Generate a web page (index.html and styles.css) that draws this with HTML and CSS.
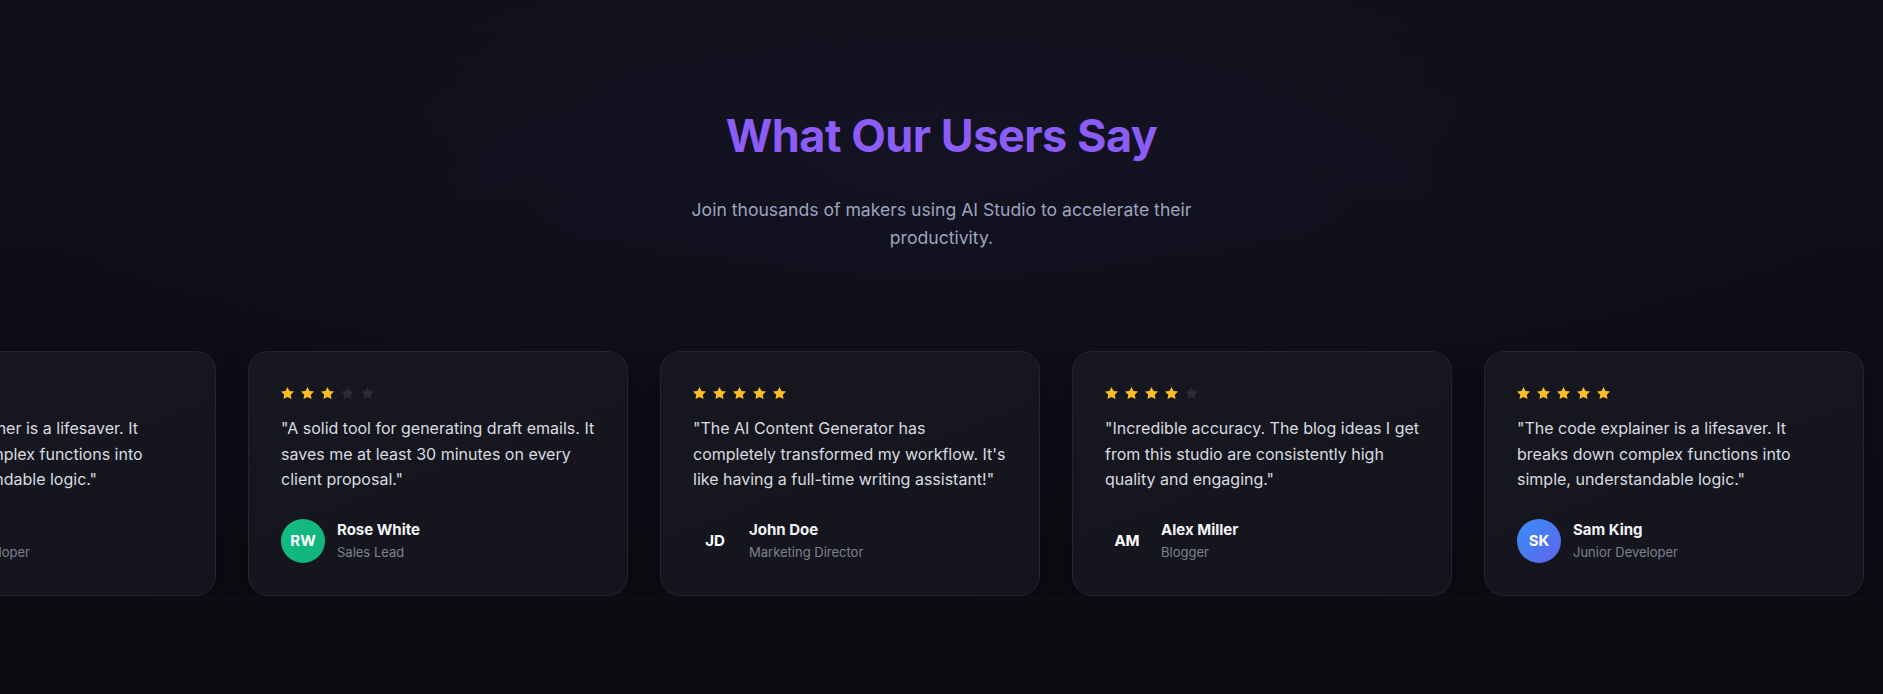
FILE: index.html
```html
<!DOCTYPE html>
<html lang="en">
<head>
<meta charset="utf-8">
<title>What Our Users Say</title>
<link rel="stylesheet" href="styles.css">
</head>
<body>
<section class="testimonials">
  <header class="intro">
    <h1 class="title">What Our Users Say</h1>
    <p class="subtitle">Join thousands of makers using AI Studio to accelerate their productivity.</p>
  </header>

  <div class="viewport">
    <div class="track">

      <article class="card">
        <div class="stars">
          <svg class="star on" viewBox="2 2 20 19.02" preserveAspectRatio="none"><polygon points="12 2 15.09 8.26 22 9.27 17 14.14 18.18 21.02 12 17.77 5.82 21.02 7 14.14 2 9.27 8.91 8.26 12 2"/></svg>
          <svg class="star on" viewBox="2 2 20 19.02" preserveAspectRatio="none"><polygon points="12 2 15.09 8.26 22 9.27 17 14.14 18.18 21.02 12 17.77 5.82 21.02 7 14.14 2 9.27 8.91 8.26 12 2"/></svg>
          <svg class="star on" viewBox="2 2 20 19.02" preserveAspectRatio="none"><polygon points="12 2 15.09 8.26 22 9.27 17 14.14 18.18 21.02 12 17.77 5.82 21.02 7 14.14 2 9.27 8.91 8.26 12 2"/></svg>
          <svg class="star on" viewBox="2 2 20 19.02" preserveAspectRatio="none"><polygon points="12 2 15.09 8.26 22 9.27 17 14.14 18.18 21.02 12 17.77 5.82 21.02 7 14.14 2 9.27 8.91 8.26 12 2"/></svg>
          <svg class="star on" viewBox="2 2 20 19.02" preserveAspectRatio="none"><polygon points="12 2 15.09 8.26 22 9.27 17 14.14 18.18 21.02 12 17.77 5.82 21.02 7 14.14 2 9.27 8.91 8.26 12 2"/></svg>
        </div>
        <p class="quote">"The code explainer is a lifesaver. It breaks down complex functions into simple, understandable logic."</p>
        <div class="author">
          <div class="avatar avatar-blue">SK</div>
          <div class="who">
            <div class="name">Sam King</div>
            <div class="role">Junior Developer</div>
          </div>
        </div>
      </article>

      <article class="card">
        <div class="stars">
          <svg class="star on" viewBox="2 2 20 19.02" preserveAspectRatio="none"><polygon points="12 2 15.09 8.26 22 9.27 17 14.14 18.18 21.02 12 17.77 5.82 21.02 7 14.14 2 9.27 8.91 8.26 12 2"/></svg>
          <svg class="star on" viewBox="2 2 20 19.02" preserveAspectRatio="none"><polygon points="12 2 15.09 8.26 22 9.27 17 14.14 18.18 21.02 12 17.77 5.82 21.02 7 14.14 2 9.27 8.91 8.26 12 2"/></svg>
          <svg class="star on" viewBox="2 2 20 19.02" preserveAspectRatio="none"><polygon points="12 2 15.09 8.26 22 9.27 17 14.14 18.18 21.02 12 17.77 5.82 21.02 7 14.14 2 9.27 8.91 8.26 12 2"/></svg>
          <svg class="star" viewBox="2 2 20 19.02" preserveAspectRatio="none"><polygon points="12 2 15.09 8.26 22 9.27 17 14.14 18.18 21.02 12 17.77 5.82 21.02 7 14.14 2 9.27 8.91 8.26 12 2"/></svg>
          <svg class="star" viewBox="2 2 20 19.02" preserveAspectRatio="none"><polygon points="12 2 15.09 8.26 22 9.27 17 14.14 18.18 21.02 12 17.77 5.82 21.02 7 14.14 2 9.27 8.91 8.26 12 2"/></svg>
        </div>
        <p class="quote">"A solid tool for generating draft emails. It saves me at least 30 minutes on every client proposal."</p>
        <div class="author">
          <div class="avatar avatar-green">RW</div>
          <div class="who">
            <div class="name">Rose White</div>
            <div class="role">Sales Lead</div>
          </div>
        </div>
      </article>

      <article class="card">
        <div class="stars">
          <svg class="star on" viewBox="2 2 20 19.02" preserveAspectRatio="none"><polygon points="12 2 15.09 8.26 22 9.27 17 14.14 18.18 21.02 12 17.77 5.82 21.02 7 14.14 2 9.27 8.91 8.26 12 2"/></svg>
          <svg class="star on" viewBox="2 2 20 19.02" preserveAspectRatio="none"><polygon points="12 2 15.09 8.26 22 9.27 17 14.14 18.18 21.02 12 17.77 5.82 21.02 7 14.14 2 9.27 8.91 8.26 12 2"/></svg>
          <svg class="star on" viewBox="2 2 20 19.02" preserveAspectRatio="none"><polygon points="12 2 15.09 8.26 22 9.27 17 14.14 18.18 21.02 12 17.77 5.82 21.02 7 14.14 2 9.27 8.91 8.26 12 2"/></svg>
          <svg class="star on" viewBox="2 2 20 19.02" preserveAspectRatio="none"><polygon points="12 2 15.09 8.26 22 9.27 17 14.14 18.18 21.02 12 17.77 5.82 21.02 7 14.14 2 9.27 8.91 8.26 12 2"/></svg>
          <svg class="star on" viewBox="2 2 20 19.02" preserveAspectRatio="none"><polygon points="12 2 15.09 8.26 22 9.27 17 14.14 18.18 21.02 12 17.77 5.82 21.02 7 14.14 2 9.27 8.91 8.26 12 2"/></svg>
        </div>
        <p class="quote">"The AI Content Generator has completely transformed my workflow. It's like having a full-time writing assistant!"</p>
        <div class="author">
          <div class="avatar">JD</div>
          <div class="who">
            <div class="name">John Doe</div>
            <div class="role">Marketing Director</div>
          </div>
        </div>
      </article>

      <article class="card">
        <div class="stars">
          <svg class="star on" viewBox="2 2 20 19.02" preserveAspectRatio="none"><polygon points="12 2 15.09 8.26 22 9.27 17 14.14 18.18 21.02 12 17.77 5.82 21.02 7 14.14 2 9.27 8.91 8.26 12 2"/></svg>
          <svg class="star on" viewBox="2 2 20 19.02" preserveAspectRatio="none"><polygon points="12 2 15.09 8.26 22 9.27 17 14.14 18.18 21.02 12 17.77 5.82 21.02 7 14.14 2 9.27 8.91 8.26 12 2"/></svg>
          <svg class="star on" viewBox="2 2 20 19.02" preserveAspectRatio="none"><polygon points="12 2 15.09 8.26 22 9.27 17 14.14 18.18 21.02 12 17.77 5.82 21.02 7 14.14 2 9.27 8.91 8.26 12 2"/></svg>
          <svg class="star on" viewBox="2 2 20 19.02" preserveAspectRatio="none"><polygon points="12 2 15.09 8.26 22 9.27 17 14.14 18.18 21.02 12 17.77 5.82 21.02 7 14.14 2 9.27 8.91 8.26 12 2"/></svg>
          <svg class="star" viewBox="2 2 20 19.02" preserveAspectRatio="none"><polygon points="12 2 15.09 8.26 22 9.27 17 14.14 18.18 21.02 12 17.77 5.82 21.02 7 14.14 2 9.27 8.91 8.26 12 2"/></svg>
        </div>
        <p class="quote">"Incredible accuracy. The blog ideas I get from this studio are consistently high quality and engaging."</p>
        <div class="author">
          <div class="avatar">AM</div>
          <div class="who">
            <div class="name">Alex Miller</div>
            <div class="role">Blogger</div>
          </div>
        </div>
      </article>

      <article class="card">
        <div class="stars">
          <svg class="star on" viewBox="2 2 20 19.02" preserveAspectRatio="none"><polygon points="12 2 15.09 8.26 22 9.27 17 14.14 18.18 21.02 12 17.77 5.82 21.02 7 14.14 2 9.27 8.91 8.26 12 2"/></svg>
          <svg class="star on" viewBox="2 2 20 19.02" preserveAspectRatio="none"><polygon points="12 2 15.09 8.26 22 9.27 17 14.14 18.18 21.02 12 17.77 5.82 21.02 7 14.14 2 9.27 8.91 8.26 12 2"/></svg>
          <svg class="star on" viewBox="2 2 20 19.02" preserveAspectRatio="none"><polygon points="12 2 15.09 8.26 22 9.27 17 14.14 18.18 21.02 12 17.77 5.82 21.02 7 14.14 2 9.27 8.91 8.26 12 2"/></svg>
          <svg class="star on" viewBox="2 2 20 19.02" preserveAspectRatio="none"><polygon points="12 2 15.09 8.26 22 9.27 17 14.14 18.18 21.02 12 17.77 5.82 21.02 7 14.14 2 9.27 8.91 8.26 12 2"/></svg>
          <svg class="star on" viewBox="2 2 20 19.02" preserveAspectRatio="none"><polygon points="12 2 15.09 8.26 22 9.27 17 14.14 18.18 21.02 12 17.77 5.82 21.02 7 14.14 2 9.27 8.91 8.26 12 2"/></svg>
        </div>
        <p class="quote">"The code explainer is a lifesaver. It breaks down complex functions into simple, understandable logic."</p>
        <div class="author">
          <div class="avatar avatar-blue">SK</div>
          <div class="who">
            <div class="name">Sam King</div>
            <div class="role">Junior Developer</div>
          </div>
        </div>
      </article>

    </div>
  </div>
</section>
</body>
</html>
```

FILE: styles.css
```css
* {
  box-sizing: border-box;
}

html, body {
  margin: 0;
  padding: 0;
}

body {
  width: 100%;
  height: 694px;
  overflow: hidden;
  font-family: Inter, "Noto Sans", "Liberation Sans", sans-serif;
  color: #e5e7eb;
  background:
    radial-gradient(ellipse 70% 55% at 50% 25%, rgba(30, 30, 60, 0.25), rgba(0, 0, 0, 0) 70%),
    linear-gradient(180deg, #10101b 0%, #0e0e18 45%, #0b0c12 100%);
}

.testimonials {
  padding-top: 110px;
}

.intro {
  text-align: center;
}

.title {
  margin: 0 0 34px;
  font-size: 45px;
  line-height: 52px;
  font-weight: 700;
  letter-spacing: -0.5px;
  color: #8b5cf6;
}

.subtitle {
  margin: 0 auto;
  max-width: 530px;
  font-size: 17.6px;
  line-height: 28px;
  color: #9ea4bd;
}

.viewport {
  margin-top: 99px;
  width: 100%;
  overflow: hidden;
}

.track {
  display: flex;
  gap: 32px;
  transform: translateX(-164px);
}

.card {
  flex: 0 0 380px;
  padding: 32px;
  border: 1px solid #23242d;
  border-radius: 20px;
  background: linear-gradient(160deg, #17181f 0%, #14151c 100%);
  box-shadow: 0 10px 30px rgba(0, 0, 0, 0.25);
}

.stars {
  display: flex;
  align-items: center;
  gap: 7px;
  height: 18px;
  margin-bottom: 14px;
}

.star {
  width: 13px;
  height: 12px;
  fill: #2a2b34;
}

.star.on {
  fill: #fbbf24;
}

.quote {
  margin: 0 0 26px;
  font-size: 16px;
  line-height: 25.5px;
  color: #d9dbe0;
}

.author {
  display: flex;
  align-items: center;
  gap: 12px;
}

.avatar {
  flex: 0 0 44px;
  width: 44px;
  height: 44px;
  border-radius: 50%;
  display: flex;
  align-items: center;
  justify-content: center;
  font-size: 15px;
  font-weight: 700;
  color: #ffffff;
}

.avatar-green {
  background: linear-gradient(135deg, #14bd84, #10b27c);
}

.avatar-blue {
  background: linear-gradient(135deg, #3b8ef5 0%, #4f74f0 60%, #6366f1 100%);
}

.who {
  display: flex;
  flex-direction: column;
  gap: 2px;
}

.name {
  font-size: 15px;
  line-height: 21px;
  font-weight: 700;
  color: #f3f4f6;
}

.role {
  font-size: 13px;
  line-height: 20px;
  color: #7d818f;
}
```
